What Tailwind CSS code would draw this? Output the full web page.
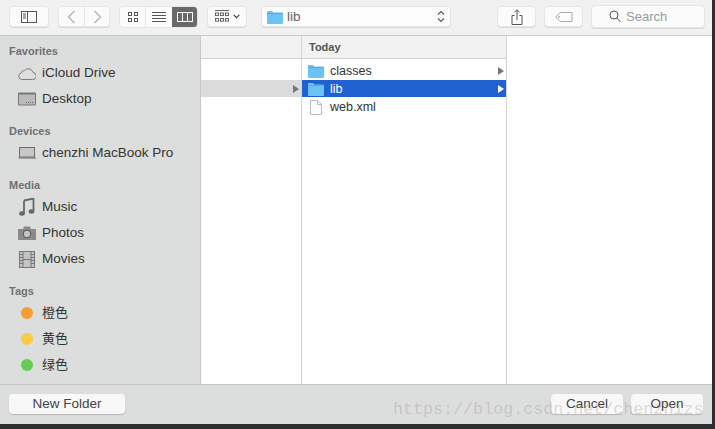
<!DOCTYPE html>
<html><head><meta charset="utf-8">
<script src="https://cdn.jsdelivr.net/npm/@tailwindcss/browser@4"></script>
</head>
<body class="m-0 overflow-hidden">
<div class="relative w-[715px] h-[429px] bg-[#2c2d2e] overflow-hidden font-['Liberation_Sans','Noto_Sans_CJK_SC',sans-serif]">
<div class="w-[712px] h-[424px] flex flex-col bg-white">
  <!-- toolbar -->
  <div class="h-[36px] shrink-0 bg-[#f1f1f1] border-b border-[#c9c9c9] flex items-start pt-[6px] pl-[9px] text-[#555]">
    <div class="w-[40px] h-[21px] bg-white/70 rounded-[4px] border border-[#e6e6e6] shadow-[0_1px_0_#d8d8d8] flex items-center justify-center">
      <svg width="16" height="12" viewBox="0 0 16 12" fill="none" stroke="#555"><rect x=".5" y=".5" width="15" height="11"/><path d="M6.500 .5v11M2 3h3M2 5h3M2 7h3"/></svg>
    </div>
    <div class="ml-[9px] w-[52px] h-[21px] bg-white/70 rounded-[4px] border border-[#e6e6e6] shadow-[0_1px_0_#d8d8d8] flex">
      <div class="w-[26px] flex items-center justify-center border-r border-[#e6e6e6]"><svg width="9" height="14" viewBox="0 0 9 14" fill="none" stroke="#b5b5b5" stroke-width="1.400"><path d="M7.500 1L1.500 7l6 6"/></svg></div>
      <div class="flex-1 flex items-center justify-center"><svg width="9" height="14" viewBox="0 0 9 14" fill="none" stroke="#b5b5b5" stroke-width="1.400"><path d="M1.500 1l6 6-6 6"/></svg></div>
    </div>
    <div class="ml-[9px] w-[79px] h-[22px] bg-white/70 rounded-[4px] border border-[#e6e6e6] flex overflow-hidden">
      <div class="w-[26px] flex items-center justify-center border-r border-[#e6e6e6]"><svg width="12" height="11" viewBox="0 0 12 11" fill="none" stroke="#555"><rect x="1.500" y=".5" width="3" height="3"/><rect x="7.500" y=".5" width="3" height="3"/><rect x="1.500" y="6.500" width="3" height="3"/><rect x="7.500" y="6.500" width="3" height="3"/></svg></div>
      <div class="w-[26px] flex items-center justify-center"><svg width="14" height="11" viewBox="0 0 14 11" stroke="#555"><path d="M0 .5h14M0 3.500h14M0 6.500h14M0 9.500h14"/></svg></div>
      <div class="flex-1 bg-[#696969] -my-px flex items-center justify-center"><svg width="16" height="10" viewBox="0 0 16 10" fill="none" stroke="#fff"><rect x=".5" y=".5" width="15" height="9"/><path d="M5.500 .5v9M10.500 .5v9"/></svg></div>
    </div>
    <div class="ml-[9px] w-[40px] h-[21px] bg-white/70 rounded-[4px] border border-[#e6e6e6] shadow-[0_1px_0_#d8d8d8] flex items-center justify-center gap-[3px]">
      <svg width="15" height="13" viewBox="0 0 15 13" fill="none" stroke="#555" stroke-width=".9"><path d="M0 .5h14"/><rect x=".5" y="3" width="3" height="2.600"/><rect x="5.500" y="3" width="3" height="2.600"/><rect x="10.500" y="3" width="3" height="2.600"/><rect x=".5" y="8.500" width="3" height="2.600"/><rect x="5.500" y="8.500" width="3" height="2.600"/><rect x="10.500" y="8.500" width="3" height="2.600"/></svg>
      <svg width="7" height="5" viewBox="0 0 7 5" fill="none" stroke="#444" stroke-width="1.200"><path d="M.7 .8l2.800 2.800L6.300 .8"/></svg>
    </div>
    <div class="ml-[14px] w-[190px] h-[21px] bg-white/80 rounded-[4px] border border-[#e6e6e6] shadow-[0_1px_0_#d8d8d8] flex items-center pl-[5px] pr-[5px]">
      <svg width="16" height="14" viewBox="0 0 16 14"><path d="M0 2a1 1 0 0 1 1-1h4l1.500 1.500H15a1 1 0 0 1 1 1V13a1 1 0 0 1-1 1H1a1 1 0 0 1-1-1z" fill="#6cc3f3"/><path d="M0 3.500h16" stroke="#3ea5e2" stroke-width=".7"/></svg>
      <span class="ml-[4px] text-[13.500px] leading-none text-[#666]">lib</span>
      <svg class="ml-auto" width="8" height="13" viewBox="0 0 8 13" fill="none" stroke="#555" stroke-width="1.100"><path d="M1 4.500l3-3 3 3M1 8.500l3 3 3-3"/></svg>
    </div>
    <div class="ml-[46px] w-[39px] h-[21px] bg-white/70 rounded-[4px] border border-[#e6e6e6] shadow-[0_1px_0_#d8d8d8] flex items-center justify-center">
      <svg width="12" height="16" viewBox="0 0 12 16" fill="none" stroke="#555"><path d="M3.500 6.500H1v9h10v-9H8.500M6 11V1M3.500 3.300L6 .8l2.500 2.500"/></svg>
    </div>
    <div class="ml-[8px] w-[39px] h-[21px] bg-white/70 rounded-[4px] border border-[#e6e6e6] shadow-[0_1px_0_#d8d8d8] flex items-center justify-center">
      <svg width="18" height="10" viewBox="0 0 18 10" fill="none" stroke="#aaa"><path d="M5 .5h12v9H5L.8 5z"/><circle cx="4" cy="5" r=".6"/></svg>
    </div>
    <div class="ml-[8px] -mt-px w-[114px] h-[23px] bg-white/70 rounded-[4px] border border-[#e6e6e6] shadow-[0_1px_0_#d8d8d8] flex items-center pl-[17px]">
      <svg width="12" height="13" viewBox="0 0 12 13" fill="none" stroke="#555"><circle cx="5" cy="5" r="4"/><path d="M8 8l3.500 4"/></svg>
      <span class="ml-[5px] text-[13px] leading-none text-[#9a9a9a]">Search</span>
    </div>
  </div>
  <!-- main -->
  <div class="flex-1 flex min-h-0">
    <!-- sidebar -->
    <div class="w-[201px] shrink-0 bg-[#dcdedd] border-r border-[#c8c8c8] text-[13.500px] text-[#333] pt-[7px]">
      <div class="pl-[9px] h-[17px] leading-[16px] text-[11px] font-bold text-[#6f7070]">Favorites</div>
      <div class="h-[26px] flex items-center pl-[18px]">
        <svg class="w-[18px]" height="14" viewBox="0 0 18 14" fill="#dedede" stroke="#666" stroke-width=".8"><path d="M3.800 13.500a3.300 3.300 0 0 1-.6-6.500A3 3 0 0 1 6.500 4.600 4.800 4.800 0 0 1 15 6.500a3.500 3.500 0 0 1-.5 7z"/></svg>
        <span class="ml-[6px] pt-px">iCloud Drive</span></div>
      <div class="h-[26px] flex items-center pl-[18px]">
        <svg class="w-[18px]" height="14" viewBox="0 0 18 14"><rect x="0" y=".5" width="18" height="13" rx="1" fill="#777"/><rect x="1" y="2.500" width="16" height="10" fill="#bbb"/><path d="M8 10.500h8" stroke="#666" stroke-dasharray="1 1"/></svg>
        <span class="ml-[6px] pt-px">Desktop</span></div>
      <div class="pl-[9px] mt-[11px] h-[17px] leading-[16px] text-[11px] font-bold text-[#6f7070]">Devices</div>
      <div class="h-[26px] flex items-center pl-[18px]">
        <svg class="w-[18px]" height="12" viewBox="0 0 18 12"><rect x="1.500" y=".5" width="15" height="9.500" fill="#c8c8c8" stroke="#6d6d6d"/><path d="M0 10.500h18v1H1z" fill="#666"/></svg>
        <span class="ml-[6px] pt-px">chenzhi MacBook Pro</span></div>
      <div class="pl-[9px] mt-[11px] h-[17px] leading-[16px] text-[11px] font-bold text-[#6f7070]">Media</div>
      <div class="h-[26px] flex items-center pl-[18px]">
        <svg class="w-[18px]" height="18" viewBox="0 0 18 18"><path d="M6 2.500L15.500 .5V13" fill="none" stroke="#666" stroke-width="1.800"/><path d="M6 2.500V15" stroke="#666" stroke-width="1.800"/><ellipse cx="4" cy="15.500" rx="2.800" ry="2.200" fill="#666"/><ellipse cx="13.500" cy="13.500" rx="2.800" ry="2.200" fill="#666"/></svg>
        <span class="ml-[6px] pt-px">Music</span></div>
      <div class="h-[26px] flex items-center pl-[18px]">
        <svg class="w-[18px]" height="14" viewBox="0 0 18 14"><path d="M0 3h5l1-2.500h6L13 3h5v11H0z" fill="#8a8a8a"/><circle cx="9" cy="8" r="3.800" fill="#c4c4c4" stroke="#555"/></svg>
        <span class="ml-[6px] pt-px">Photos</span></div>
      <div class="h-[26px] flex items-center pl-[18px]">
        <svg class="w-[18px]" height="17" viewBox="0 0 18 17"><rect x="1.500" y=".5" width="15" height="16" fill="#c4c4c4" stroke="#777"/><path d="M5 .5v16M13 .5v16M5 8.500h8M1.500 3.500H5M1.500 6.500H5M1.500 9.500H5M1.500 12.500H5M13 3.500h3.500M13 6.500h3.500M13 9.500h3.500M13 12.500h3.500" stroke="#777"/></svg>
        <span class="ml-[6px] pt-px">Movies</span></div>
      <div class="pl-[9px] mt-[11px] h-[17px] leading-[16px] text-[11px] font-bold text-[#6f7070]">Tags</div>
      <div class="h-[26px] flex items-center pl-[21px]"><span class="w-[12px] h-[12px] rounded-full bg-[#f89c34]"></span><span class="ml-[9px] text-[13px]">橙色</span></div>
      <div class="h-[26px] flex items-center pl-[21px]"><span class="w-[12px] h-[12px] rounded-full bg-[#fbcc41]"></span><span class="ml-[9px] text-[13px]">黄色</span></div>
      <div class="h-[26px] flex items-center pl-[21px]"><span class="w-[12px] h-[12px] rounded-full bg-[#62cf53]"></span><span class="ml-[9px] text-[13px]">绿色</span></div>
    </div>
    <!-- column 1 -->
    <div class="w-[101px] shrink-0 border-r border-[#d4d4d4] flex flex-col">
      <div class="h-[23px] bg-[#f2f2f2] border-b border-[#d0d0d0]"></div>
      <div class="h-[21px]"></div>
      <div class="h-[17px] bg-[#dbdbdb] flex items-center justify-end pr-[2px]"><svg width="6" height="8" viewBox="0 0 6 8"><path d="M0 0l6 4-6 4z" fill="#777"/></svg></div>
    </div>
    <!-- column 2 -->
    <div class="w-[205px] shrink-0 border-r border-[#d4d4d4] flex flex-col text-[12.500px] text-[#333]">
      <div class="h-[23px] bg-[#f2f2f2] border-b border-[#d0d0d0] flex items-center pl-[7px] text-[11px] font-bold text-[#555]">Today</div>
      <div class="h-[3px]"></div>
      <div class="h-[18px] flex items-center pl-[6px] pr-[2px]">
        <svg width="16" height="14" viewBox="0 0 16 14"><path d="M0 2a1 1 0 0 1 1-1h4l1.500 1.500H15a1 1 0 0 1 1 1V13a1 1 0 0 1-1 1H1a1 1 0 0 1-1-1z" fill="#6cc3f3"/><path d="M0 3.500h16" stroke="#3ea5e2" stroke-width=".7"/></svg>
        <span class="ml-[6px]">classes</span>
        <svg class="ml-auto" width="6" height="8" viewBox="0 0 6 8"><path d="M0 0l6 4-6 4z" fill="#777"/></svg>
      </div>
      <div class="h-[17px] flex items-center pl-[6px] pr-[2px] bg-[#1f62cf] text-white">
        <svg width="16" height="14" viewBox="0 0 16 14"><path d="M0 2a1 1 0 0 1 1-1h4l1.500 1.500H15a1 1 0 0 1 1 1V13a1 1 0 0 1-1 1H1a1 1 0 0 1-1-1z" fill="#6cc3f3"/><path d="M0 3.500h16" stroke="#3ea5e2" stroke-width=".7"/></svg>
        <span class="ml-[6px] pt-px">lib</span>
        <svg class="ml-auto" width="6" height="8" viewBox="0 0 6 8"><path d="M0 0l6 4-6 4z" fill="#fff"/></svg>
      </div>
      <div class="h-[19px] pt-px flex items-center pl-[8px]">
        <svg width="12" height="15" viewBox="0 0 12 15" fill="#fff" stroke="#bbb"><path d="M.5 .5h7l4 4v10H.5zM7.500 .5v4h4"/></svg>
        <span class="ml-[8px]">web.xml</span>
      </div>
    </div>
    <div class="flex-1"></div>
  </div>
  <!-- footer -->
  <div class="h-[40px] shrink-0 bg-[#dcdedd] border-t border-[#c4c4c4] flex items-start pt-[9px] pl-[9px] pr-[9px] text-[13.500px] text-[#444]">
    <div class="w-[116px] h-[20px] bg-[#f8f8f8] rounded-[4px] shadow-[0_1px_1px_#b5b5b5] flex items-center justify-center">New Folder</div>
    <div class="ml-auto w-[72px] h-[20px] bg-[#f8f8f8] rounded-[4px] shadow-[0_1px_1px_#b5b5b5] flex items-center justify-center">Cancel</div>
    <div class="ml-[8px] w-[72px] h-[20px] bg-[#f8f8f8] rounded-[4px] shadow-[0_1px_1px_#b5b5b5] flex items-center justify-center">Open</div>
  </div>
</div>
<div class="absolute left-[393px] top-[399px] font-['Liberation_Mono',monospace] text-[16.700px] leading-[22px] text-[#8c8c8c]/30 whitespace-nowrap">https://blog.csdn.net/chenzhizs</div>
</div>
</body></html>
